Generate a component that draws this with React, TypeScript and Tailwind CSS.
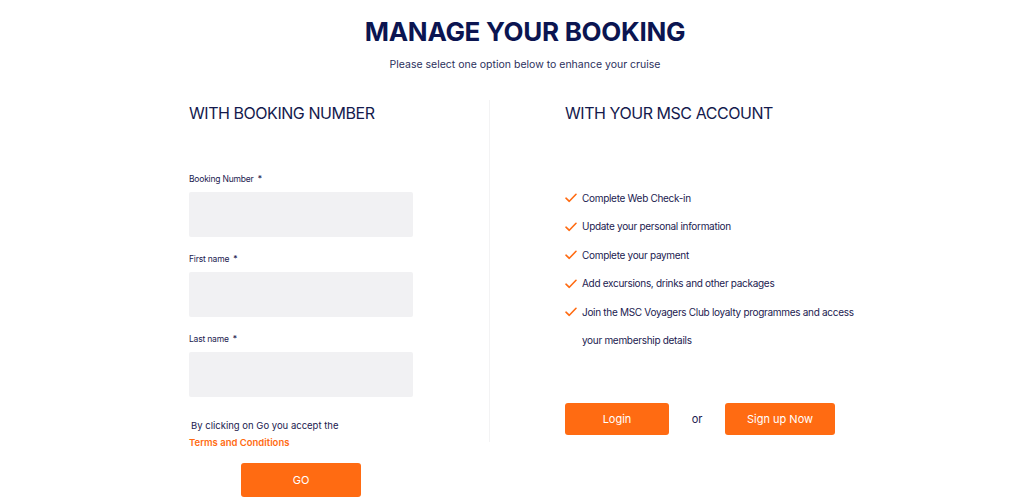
import React from "react";

const font = { fontFamily: "Inter, 'Noto Sans', sans-serif" };

function Check() {
  return (
    <svg width="12" height="10" viewBox="0 0 12 10" className="shrink-0">
      <path d="M1 5.2 L4.3 8.3 L11 1.3" fill="none" stroke="#ff6b12" strokeWidth="1.6" strokeLinecap="round" strokeLinejoin="round" />
    </svg>
  );
}

function Field({ label }: { label: string }) {
  return (
    <div className="flex flex-col">
      <label className="text-[8.5px] leading-[12px] text-[#1b2150] tracking-[-0.2px]">
        {label} <span className="ml-[2px]">*</span>
      </label>
      <div className="mt-[7px] h-[45px] w-[224px] rounded-[2px] bg-[#f1f1f3]" />
    </div>
  );
}

export default function App() {
  const items = [
    "Complete Web Check-in",
    "Update your personal information",
    "Complete your payment",
    "Add excursions, drinks and other packages",
    "Join the MSC Voyagers Club loyalty programmes and access",
  ];
  return (
    <div className="w-[1024px] h-[504px] bg-white overflow-hidden" style={font}>
      <div className="ml-[189px] w-[672px] flex flex-col">
        <h1 className="mt-[16px] text-center text-[26px] leading-[32px] font-bold text-[#0b1551] tracking-[-0.3px]">
          MANAGE YOUR BOOKING
        </h1>
        <p className="mt-[10px] text-center text-[10.5px] leading-[14px] text-[#2b2f5c]">
          Please select one option below to enhance your cruise
        </p>
        <div className="mt-[28px] flex">
          <div className="w-[300px] shrink-0 flex flex-col">
            <h2 className="mt-[3px] text-[16px] leading-[20px] text-[#141a4d] tracking-[-0.45px]">WITH BOOKING NUMBER</h2>
            <div className="mt-[50px] flex flex-col gap-[16px]">
              <Field label="Booking Number" />
              <Field label="First name" />
              <Field label="Last name" />
            </div>
            <p className="mt-[22px] ml-[2px] text-[9.5px] leading-[14px] text-[#1b2150]">By clicking on Go you accept the</p>
            <a className="mt-[3px] text-[9.5px] leading-[14px] font-semibold text-[#ff6b12]">Terms and Conditions</a>
            <div className="w-[224px] flex justify-center mt-[13px]">
              <button className="w-[120px] h-[34px] rounded-[3px] bg-[#ff6b12] text-white text-[11px]">GO</button>
            </div>
          </div>
          <div className="w-px shrink-0 h-[342px] bg-[#f3f3f4]" />
          <div className="pl-[75px] shrink-0 flex flex-col">
            <h2 className="mt-[3px] text-[16px] leading-[20px] text-[#141a4d] tracking-[-0.45px]">WITH YOUR MSC ACCOUNT</h2>
            <ul className="mt-[61px] flex flex-col">
              {items.map((t) => (
                <li key={t} className="flex items-center gap-[5px] h-[28.5px] text-[10px] tracking-[-0.3px] whitespace-nowrap text-[#1b2150]">
                  <Check />
                  <span>{t}</span>
                </li>
              ))}
              <li className="flex items-center h-[28.5px] pl-[17px] text-[10px] tracking-[-0.3px] text-[#1b2150]">your membership details</li>
            </ul>
            <div className="mt-[48px] flex items-center">
              <button className="w-[104px] h-[32px] rounded-[3px] bg-[#ff6b12] text-white text-[11px]">Login</button>
              <span className="w-[56px] text-center text-[11px] text-[#1b2150]">or</span>
              <button className="w-[110px] h-[32px] rounded-[3px] bg-[#ff6b12] text-white text-[11px]">Sign up Now</button>
            </div>
          </div>
        </div>
      </div>
    </div>
  );
}
